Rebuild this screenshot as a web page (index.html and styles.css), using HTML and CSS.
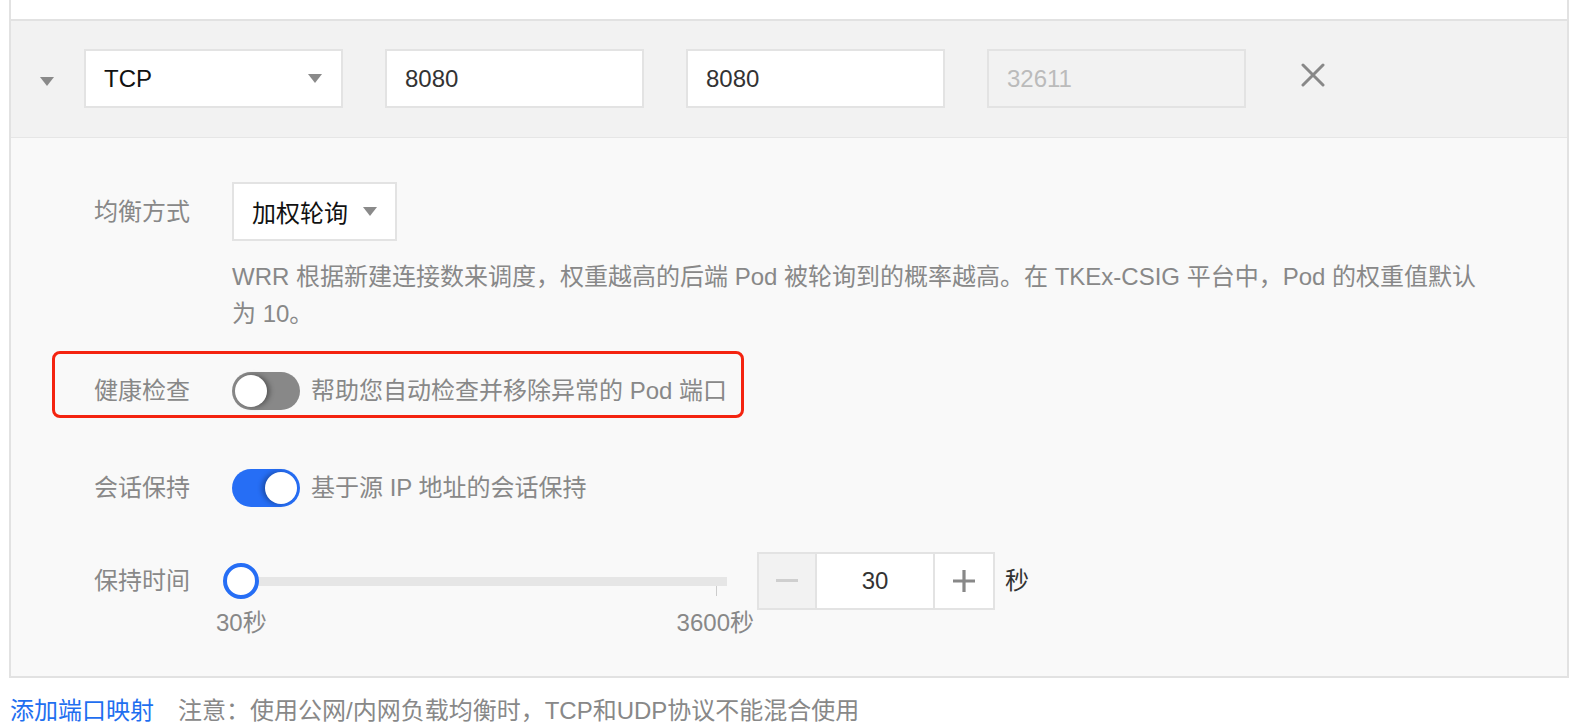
FILE: index.html
```html
<!DOCTYPE html>
<html lang="zh-CN">
<head>
<meta charset="utf-8">
<title>端口映射</title>
<link rel="stylesheet" href="styles.css">
</head>
<body>
<div class="panel">
  <div class="prev-row"></div>
  <div class="port-item">
    <div class="port-head">
      <span class="caret"></span>
      <div class="field select"><span class="val">TCP</span><span class="arrow"></span></div>
      <div class="field">8080</div>
      <div class="field">8080</div>
      <div class="field disabled">32611</div>
      <svg class="close" width="24" height="24" viewBox="0 0 24 24"><path d="M2 2 L22 22 M22 2 L2 22" stroke="#888" stroke-width="3" stroke-linecap="round" fill="none"/></svg>
    </div>
    <div class="port-body">
      <div class="row">
        <span class="label">均衡方式</span>
        <div class="select-sm"><span>加权轮询</span><span class="arrow"></span></div>
      </div>
      <p class="desc">WRR 根据新建连接数来调度，权重越高的后端 Pod 被轮询到的概率越高。在 TKEx-CSIG 平台中，Pod 的权重值默认为 10。</p>
      <div class="highlight">
        <span class="label">健康检查</span>
        <span class="switch off"><span class="knob"></span></span>
        <span class="hint">帮助您自动检查并移除异常的 Pod 端口</span>
      </div>
      <div class="row session">
        <span class="label">会话保持</span>
        <span class="switch on"><span class="knob"></span></span>
        <span class="hint">基于源 IP 地址的会话保持</span>
      </div>
      <div class="row keep">
        <span class="label tall">保持时间</span>
        <div class="slider">
          <div class="track-area">
            <div class="track"><span class="thumb"></span><span class="tick"></span></div>
          </div>
          <div class="marks"><span>30秒</span><span>3600秒</span></div>
        </div>
        <div class="stepper">
          <span class="step minus"><svg width="22" height="4" viewBox="0 0 22 4"><rect x="0" y="0" width="22" height="3" fill="#cfcfcf"/></svg></span>
          <span class="num">30</span>
          <span class="step plus"><svg width="22" height="22" viewBox="0 0 22 22"><path d="M11 0 V22 M0 11 H22" stroke="#888" stroke-width="3.2" fill="none"/></svg></span>
        </div>
        <span class="unit">秒</span>
      </div>
    </div>
  </div>
</div>
<div class="footer">
  <a class="link" href="#">添加端口映射</a>
  <span class="note">注意：使用公网/内网负载均衡时，TCP和UDP协议不能混合使用</span>
</div>
</body>
</html>
```
FILE: styles.css
```css
* { box-sizing: border-box; }
html, body { margin: 0; padding: 0; background: #fff; }
body {
  font-family: "Liberation Sans", "Noto Sans CJK SC", sans-serif;
  font-size: 24px;
  color: #333;
  overflow: hidden;
}
.panel {
  margin-left: 9px;
  width: 1560px;
  border-left: 2px solid #e2e2e2;
  border-right: 2px solid #e2e2e2;
  border-bottom: 2px solid #e2e2e2;
}
.prev-row { height: 19px; background: #fff; }
.port-item { border-top: 2px solid #e2e2e2; }
.port-head {
  height: 117px;
  background: #f2f2f2;
  border-bottom: 1px solid #e6e6e6;
  display: flex;
  align-items: center;
  padding-left: 29px;
  padding-bottom: 1px;
}
.caret {
  width: 0; height: 0;
  border-left: 7px solid transparent;
  border-right: 7px solid transparent;
  border-top: 9px solid #8a8a8a;
  margin-top: 6px;
  margin-right: 30px;
}
.field {
  width: 259px;
  height: 59px;
  border: 2px solid #e3e3e3;
  background: #fff;
  padding-left: 18px;
  display: flex;
  align-items: center;
  margin-right: 42px;
  color: #333;
  line-height: 1;
}
.field.select { justify-content: space-between; padding-right: 19px; color: #111; }
.field.disabled { background: #f2f2f2; color: #bbb; margin-right: 55px; }
.arrow {
  width: 0; height: 0;
  border-left: 7px solid transparent;
  border-right: 7px solid transparent;
  border-top: 9px solid #8a8a8a;
}
.close { margin-top: -8px; }

.port-body {
  background: #f9f9f9;
  padding: 44px 0 40px 83px;
}
.row { display: flex; align-items: center; }
.label { width: 138px; color: #888; flex: none; line-height: 36px; }
.select-sm {
  height: 59px;
  border: 2px solid #e3e3e3;
  background: #fff;
  display: flex;
  align-items: center;
  padding: 0 18px;
  color: #111;
}
.select-sm .arrow { margin-left: 15px; }
.desc {
  margin: 17px 0 0 138px;
  max-width: 1262px;
  line-height: 37px;
  color: #888;
}
.highlight {
  margin: 19px 0 0 -42px;
  width: 692px;
  height: 67px;
  border: 3px solid #f42410;
  border-radius: 8px;
  padding-left: 39px;
  padding-top: 12px;
  display: flex;
  align-items: center;
}
.switch {
  width: 68px;
  height: 38px;
  border-radius: 19px;
  position: relative;
  flex: none;
  margin-right: 11px;
}
.switch.off { background: #888; }
.switch.on { background: #266ef5; }
.switch .knob {
  position: absolute;
  top: 3px;
  width: 32px;
  height: 32px;
  border-radius: 50%;
  background: #fff;
}
.switch.off .knob { left: 3px; box-shadow: 3px 0 5px rgba(0,0,0,0.35); }
.switch.on .knob { right: 3px; box-shadow: -3px 0 5px rgba(0,0,0,0.3); }
.hint { color: #888; line-height: 36px; }
.session { margin-top: 50px; height: 40px; }
.keep { margin-top: 44px; align-items: flex-start; }
.label.tall { line-height: 58px; }
.slider { width: 538px; margin-left: -16px; }
.track-area { height: 58px; display: flex; align-items: center; }
.track {
  margin-left: 25px;
  width: 486px;
  height: 9px;
  background: #e6e6e6;
  position: relative;
}
.thumb {
  position: absolute;
  left: -18px;
  top: -14px;
  width: 36px;
  height: 36px;
  border-radius: 50%;
  border: 4px solid #266ef5;
  background: #fff;
}
.tick {
  position: absolute;
  left: 475px;
  top: 9px;
  width: 1px;
  height: 10px;
  background: #ccc;
}
.marks {
  display: flex;
  justify-content: space-between;
  line-height: 26px;
  color: #888;
}
.stepper {
  margin-left: 3px;
  display: flex;
  height: 58px;
  border: 2px solid #e3e3e3;
  background: #fff;
}
.step { width: 58px; display: flex; align-items: center; justify-content: center; }
.step.minus { background: #f2f2f2; border-right: 2px solid #e3e3e3; }
.step.plus { width: 60px; border-left: 2px solid #e3e3e3; }
.num { width: 116px; display: flex; align-items: center; justify-content: center; color: #333; }
.unit { margin-left: 10px; line-height: 58px; color: #333; }

.footer {
  margin-top: 15px;
  padding-left: 10px;
  line-height: 36px;
  display: flex;
  gap: 24px;
}
.link { color: #1f6ff0; text-decoration: none; }
.note { color: #888; }
```
